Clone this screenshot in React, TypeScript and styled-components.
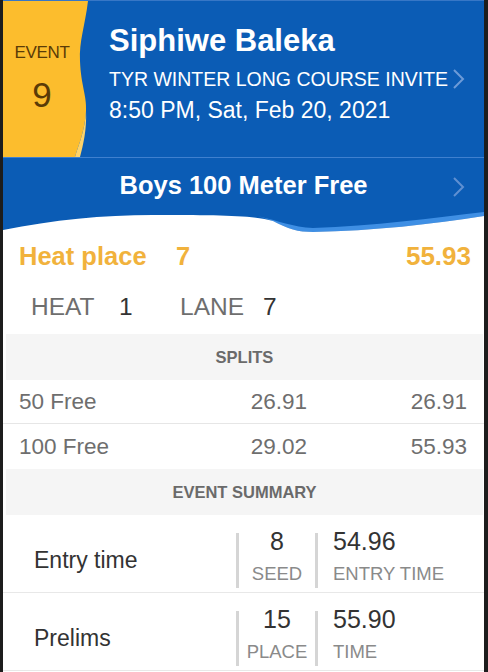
import React, {ReactElement} from 'react';
import styled, {createGlobalStyle} from 'styled-components';

const blue = '#0b5cb5';
const yellow = '#fcbd2d';
const orange = '#f1b23c';
const grey = '#6e6e6e';
const ink = '#333333';

const GlobalStyle = createGlobalStyle`
  html, body {
    margin: 0;
    padding: 0;
    background: #1d1d1d;
  }

  body {
    font-family: "Liberation Sans", Arial, sans-serif;
  }
`;

const Screen = styled.div`
  width: 481px;
  height: 672px;
  margin-left: 3px;
  background: #ffffff;
  overflow: hidden;
`;

const Header = styled.header`
  display: flex;
  height: 156px;
  background: ${blue};
  border-top: 1px solid #3777c6;
`;

const Badge = styled.div`
  display: flex;
  flex-shrink: 0;
`;

const BadgeText = styled.div`
  display: flex;
  flex-direction: column;
  align-items: center;
  width: 62px;
  padding-left: 8px;
  background: ${yellow};
  color: #5a3b07;
`;

const BadgeLabel = styled.div`
  font-size: 17px;
  line-height: 20px;
  margin-top: 42px;
  letter-spacing: -0.3px;
`;

const BadgeNumber = styled.div`
  font-size: 35px;
  line-height: 40px;
  margin-top: 12px;
`;

const Info = styled.div`
  flex: 1;
  display: flex;
  flex-direction: column;
  padding: 22px 19px 0 18px;
  color: #ffffff;
`;

const Name = styled.div`
  font-size: 31px;
  font-weight: 700;
  line-height: 36px;
`;

const MeetRow = styled.div`
  display: flex;
  align-items: center;
  justify-content: space-between;
  height: 40px;
`;

const Meet = styled.div`
  font-size: 19.5px;
  white-space: nowrap;
`;

const When = styled.div`
  font-size: 23px;
  line-height: 22px;
`;

const Band = styled.div`
  display: flex;
  flex-direction: column;
  background: ${blue};
  border-top: 1px solid #3f80cf;
`;

const BandRow = styled.div`
  position: relative;
  display: flex;
  align-items: center;
  justify-content: center;
  height: 54px;
  color: #ffffff;
  font-size: 25.5px;
  font-weight: 700;
`;

const BandChevron = styled.div`
  position: absolute;
  right: 19px;
  top: 19px;
  display: flex;
`;

const Wave = styled.svg`
  display: block;
`;

const PlaceRow = styled.div`
  display: flex;
  align-items: center;
  height: 48px;
  padding: 0 13px 0 16px;
  color: ${orange};
  font-size: 25.5px;
  font-weight: 700;
`;

const PlaceLabel = styled.span`
  width: 157px;
`;

const PlaceTime = styled.span`
  margin-left: auto;
  font-size: 26px;
`;

const LaneRow = styled.div`
  display: flex;
  align-items: center;
  height: 54px;
  padding-left: 28px;
  font-size: 24.5px;
`;

const LaneLabel = styled.span<{width: number}>`
  width: ${({width}) => width}px;
  color: ${grey};
`;

const LaneValue = styled.span<{width?: number}>`
  width: ${({width}) => (width ? `${width}px` : 'auto')};
  color: ${ink};
`;

const SectionHeader = styled.div`
  display: flex;
  align-items: center;
  justify-content: center;
  height: 46px;
  margin: 0 1px 0 3px;
  background: #f5f5f5;
  color: #6a6a6a;
  font-size: 16.5px;
  font-weight: 700;
`;

const SplitRow = styled.div<{divider: boolean}>`
  display: grid;
  grid-template-columns: 1fr 120px 160px;
  align-items: center;
  height: ${({divider}) => (divider ? 43 : 45)}px;
  padding: 0 17px 0 16px;
  color: ${grey};
  font-size: 22.5px;
  border-bottom: ${({divider}) => (divider ? '1px solid #e6e6e6' : 'none')};
`;

const Right = styled.span`
  text-align: right;
`;

const SummaryRow = styled.div`
  display: grid;
  grid-template-columns: 233px 3px 76px 3px 1fr;
  height: 65px;
  padding: 12px 0 0;
  border-bottom: 1px solid #e8e8e8;
`;

const SummaryLabel = styled.div`
  display: flex;
  align-items: center;
  padding: 2px 0 0 31px;
  color: ${ink};
  font-size: 23px;
`;

const Bar = styled.div`
  margin: 6px 0 4px;
  background: #d5d5d5;
`;

const Cell = styled.div<{center?: boolean}>`
  display: flex;
  flex-direction: column;
  align-items: ${({center}) => (center ? 'center' : 'flex-start')};
  padding-left: ${({center}) => (center ? 0 : 15)}px;
  white-space: nowrap;
`;

const CellValue = styled.div`
  font-size: 25px;
  line-height: 28px;
  color: ${ink};
`;

const CellCaption = styled.div`
  margin-top: 5px;
  font-size: 18.5px;
  line-height: 28px;
  color: #8a8a8a;
`;

function Chevron({color}: {color: string}): ReactElement {
  return (
    <svg width="13" height="20" viewBox="0 0 13 20">
      <path d="M2 1 L11 10 L2 19" fill="none" stroke={color} strokeWidth="2" />
    </svg>
  );
}

const splits = [
  {name: '50 Free', split: '26.91', total: '26.91'},
  {name: '100 Free', split: '29.02', total: '55.93'},
];

const summary = [
  {label: 'Entry time', rank: '8', rankLabel: 'SEED', time: '54.96', timeLabel: 'ENTRY TIME'},
  {label: 'Prelims', rank: '15', rankLabel: 'PLACE', time: '55.90', timeLabel: 'TIME'},
];

export default function App(): ReactElement {
  return (
    <>
      <GlobalStyle />
      <Screen>
        <Header>
          <Badge>
            <BadgeText>
              <BadgeLabel>EVENT</BadgeLabel>
              <BadgeNumber>9</BadgeNumber>
            </BadgeText>
            <svg width="18" height="156" viewBox="0 0 18 156">
              <path
                d="M0 0 L15 0 C12 25 6 40 7 60 C8 85 14 95 13 110 C12 130 5 145 2 156 L0 156 Z"
                fill={yellow}
              />
              <path
                d="M13 110 C12 130 5 145 2 156 L7 156 C10 145 14 128 13 110 Z"
                fill="#fdd36a"
              />
            </svg>
          </Badge>
          <Info>
            <Name>Siphiwe Baleka</Name>
            <MeetRow>
              <Meet>TYR WINTER LONG COURSE INVITE</Meet>
              <Chevron color="#6d9bd8" />
            </MeetRow>
            <When>8:50 PM, Sat, Feb 20, 2021</When>
          </Info>
        </Header>
        <Band>
          <BandRow>
            Boys 100 Meter Free
            <BandChevron>
              <Chevron color="#5f90d2" />
            </BandChevron>
          </BandRow>
          <Wave width="481" height="20" viewBox="0 0 481 20" preserveAspectRatio="none">
            <path
              d="M255 4 C275 9 290 15 310 16 C370 14 430 6 481 0 L481 4 C430 12 370 19 310 20 C295 20 285 17 270 9 Z"
              fill="#3f8fe4"
            />
            <path
              d="M0 18 C50 8 100 3 150 3 C210 3 250 3 270 9 C285 17 295 20 310 20 C370 19 430 12 481 4 L481 20 L0 20 Z"
              fill="#ffffff"
            />
          </Wave>
        </Band>
        <PlaceRow>
          <PlaceLabel>Heat place</PlaceLabel>
          <span>7</span>
          <PlaceTime>55.93</PlaceTime>
        </PlaceRow>
        <LaneRow>
          <LaneLabel width={88}>HEAT</LaneLabel>
          <LaneValue width={61}>1</LaneValue>
          <LaneLabel width={83}>LANE</LaneLabel>
          <LaneValue>7</LaneValue>
        </LaneRow>
        <SectionHeader>SPLITS</SectionHeader>
        {splits.map((s, i) => (
          <SplitRow key={s.name} divider={i < splits.length - 1}>
            <span>{s.name}</span>
            <Right>{s.split}</Right>
            <Right>{s.total}</Right>
          </SplitRow>
        ))}
        <SectionHeader>EVENT SUMMARY</SectionHeader>
        {summary.map((s) => (
          <SummaryRow key={s.label}>
            <SummaryLabel>{s.label}</SummaryLabel>
            <Bar />
            <Cell center>
              <CellValue>{s.rank}</CellValue>
              <CellCaption>{s.rankLabel}</CellCaption>
            </Cell>
            <Bar />
            <Cell>
              <CellValue>{s.time}</CellValue>
              <CellCaption>{s.timeLabel}</CellCaption>
            </Cell>
          </SummaryRow>
        ))}
      </Screen>
    </>
  );
}
